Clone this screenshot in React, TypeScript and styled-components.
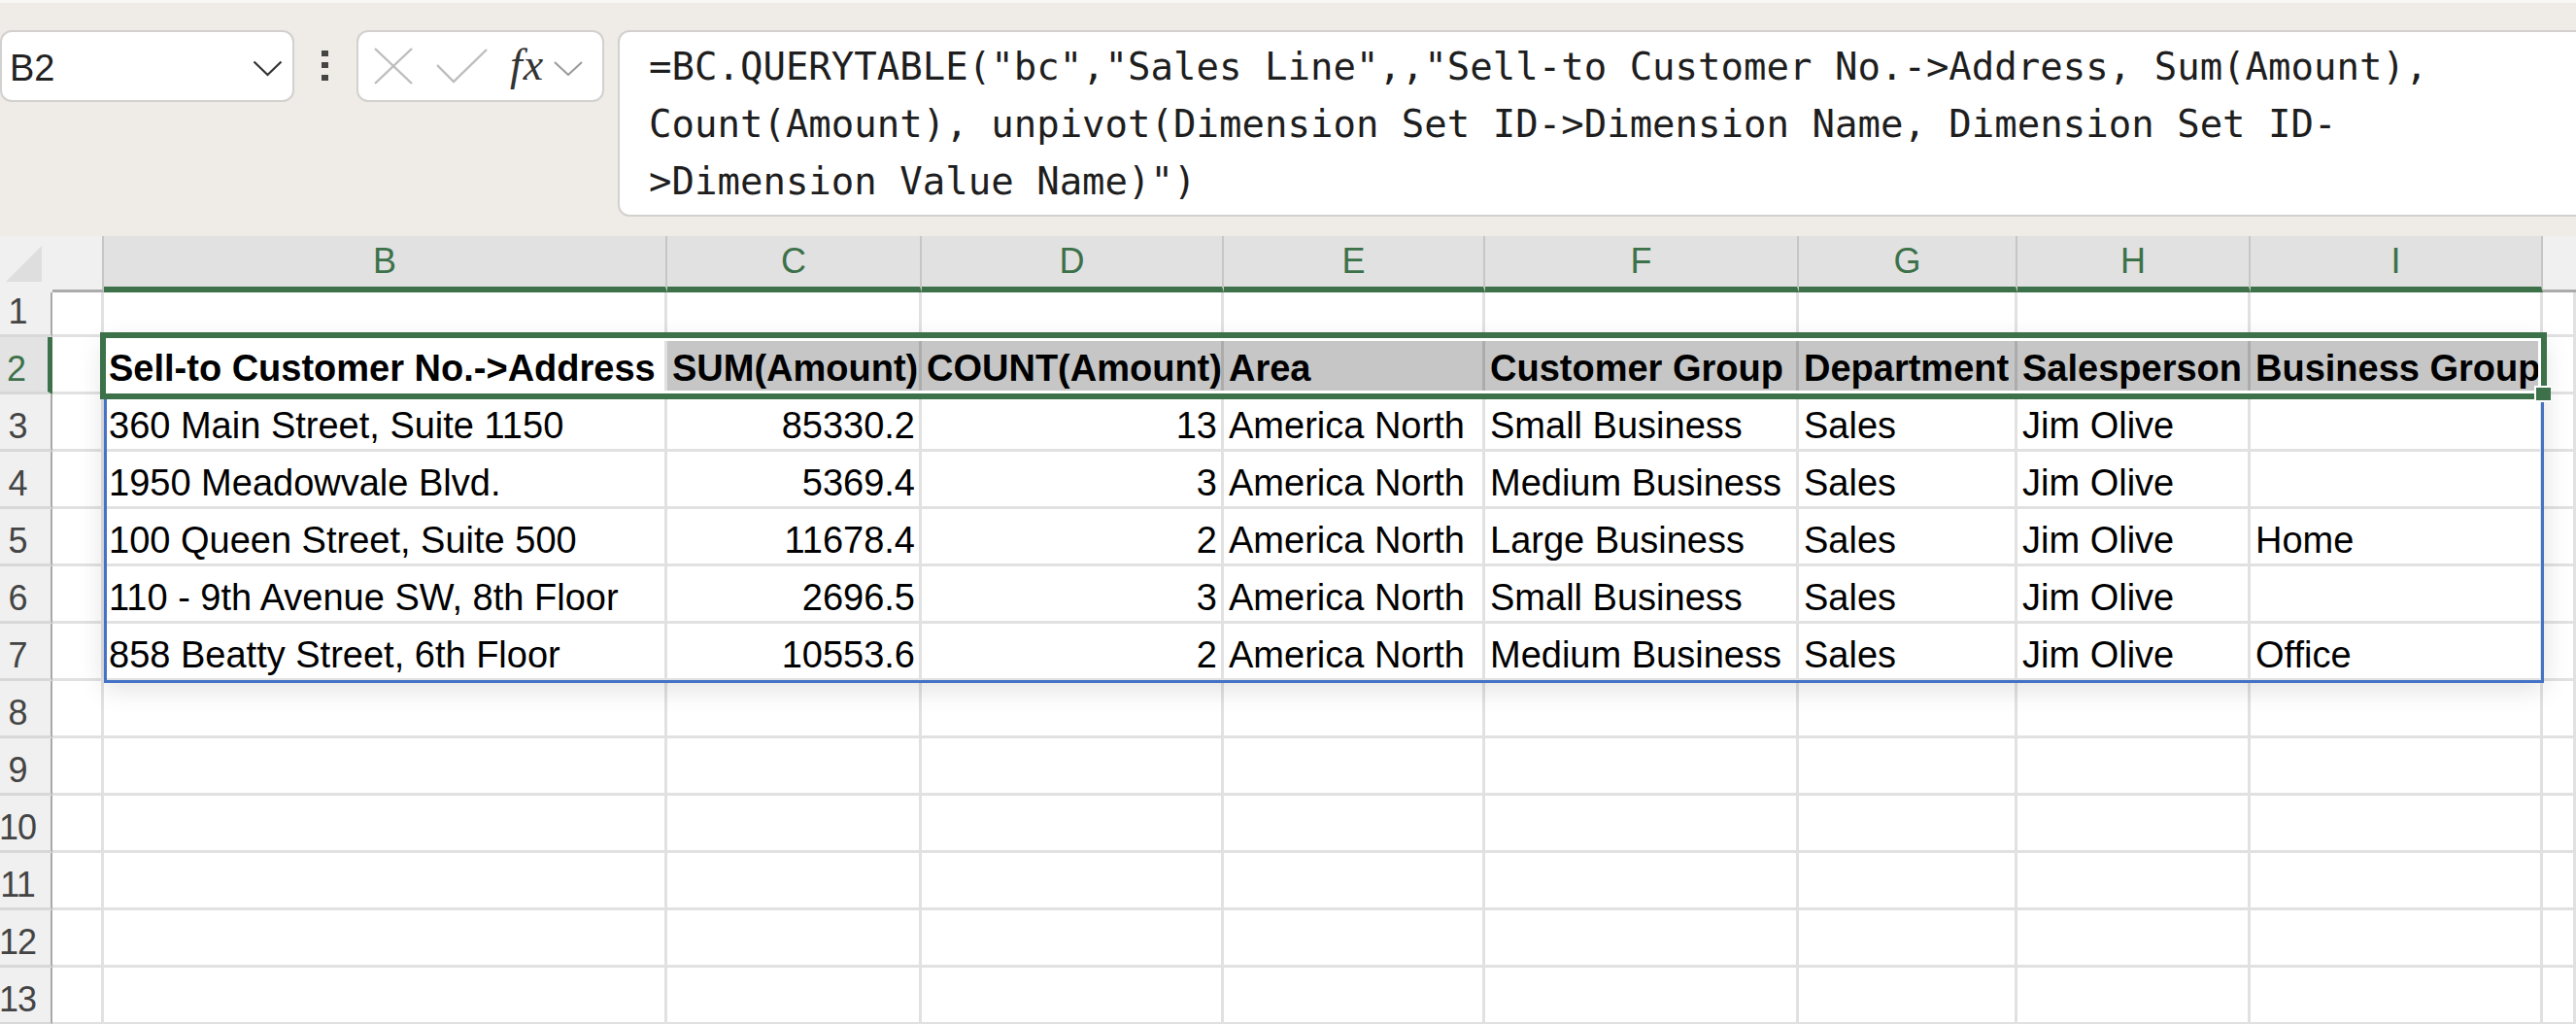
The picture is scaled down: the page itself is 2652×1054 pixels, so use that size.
import React from "react";
import styled, { createGlobalStyle, css } from "styled-components";

const GREEN = "#3d7149";
const GRID = "#e1e1e1";
const CELL_FONT = `"Liberation Sans", Arial, sans-serif`;

const GlobalStyle = createGlobalStyle`
  html, body {
    margin: 0;
    padding: 0;
    background: #ffffff;
    overflow: hidden;
  }
  * {
    box-sizing: border-box;
  }
`;

const Page = styled.div`
  width: 2652px;
  height: 1054px;
  overflow: hidden;
  background: #ffffff;
  font-family: ${CELL_FONT};
`;

const FormulaBar = styled.div`
  height: 243px;
  display: flex;
  align-items: flex-start;
  padding-top: 28px;
  background: #efebe7;
  border-top: 3px solid #f8f7f6;
`;

const InputShell = styled.div`
  height: 74px;
  background: #ffffff;
  border: 2px solid #d3d1cf;
  border-radius: 12px;
  display: flex;
  align-items: center;
`;

const NameBox = styled(InputShell)`
  width: 303px;
  padding: 4px 10px 0 8px;
  justify-content: space-between;
  font-size: 38px;
  color: #222222;

  & svg {
    margin-top: 0;
  }
`;

const Grip = styled.svg`
  margin: 21px 0 0 28px;
  flex: none;
`;

const ActionBox = styled(InputShell)`
  width: 255px;
  margin-left: 29px;
  padding-left: 16px;
`;

const FxLabel = styled.span`
  font-family: "Liberation Serif", "Times New Roman", serif;
  font-style: italic;
  font-size: 46px;
  color: #333333;
  margin: -4px 0 0 22px;
  letter-spacing: 1px;
`;

const FormulaInput = styled.div`
  flex: 1;
  height: 192px;
  margin: 0 -40px 0 14px;
  padding: 6px 0 0 30px;
  background: #ffffff;
  border: 2px solid #d3d1cf;
  border-radius: 12px;
  font-family: "DejaVu Sans Mono", "Liberation Mono", monospace;
  font-size: 39px;
  line-height: 59px;
  color: #1e1e1e;
  white-space: pre;
`;

const FormulaLine = styled.span`
  display: block;
`;

const Sheet = styled.div`
  position: relative;
  display: grid;
  grid-template-columns: 54px 53px 580px 262px 311px 269px 323px 225px 240px 301px 1fr;
  grid-template-rows: 58px 46px repeat(12, 59px);
`;

const Corner = styled.div`
  background: #f0f0f0;
  padding: 10px 0 0 6px;
`;

const ColHeader = styled.div<{ $active?: boolean; $last?: boolean }>`
  display: flex;
  align-items: center;
  justify-content: center;
  font-size: 36px;
  color: ${GREEN};
  background: ${({ $active }) => ($active ? "#e1e1e1" : "#f0f0f0")};
  border-right: ${({ $last }) => ($last ? "none" : "2px solid #c6c6c6")};
  border-bottom: ${({ $active }) =>
    $active ? `6px solid ${GREEN}` : "3px solid #ababab"};
`;

const RowHeader = styled.div<{ $active?: boolean }>`
  display: flex;
  align-items: flex-end;
  justify-content: center;
  padding: 0 16px 2px 0;
  font-size: 36px;
  letter-spacing: -1px;
  color: ${({ $active }) => ($active ? GREEN : "#444444")};
  background: ${({ $active }) => ($active ? "#e3e3e3" : "#f0f0f0")};
  border-bottom: 3px solid #d8d8d8;
  border-right: ${({ $active }) =>
    $active ? `5px solid ${GREEN}` : "2px solid #a9a9a9"};
`;

const Cell = styled.div<{ $align?: "left" | "right"; $bold?: boolean; $shade?: boolean }>`
  display: flex;
  align-items: flex-end;
  justify-content: ${({ $align }) => ($align === "right" ? "flex-end" : "flex-start")};
  padding: 0 4px 2px 5px;
  overflow: hidden;
  white-space: nowrap;
  font-size: 38px;
  font-weight: ${({ $bold }) => ($bold ? 700 : 400)};
  color: #000000;
  background: #ffffff;
  border-right: 3px solid ${GRID};
  border-bottom: 3px solid ${GRID};

  ${({ $shade }) =>
    $shade &&
    css`
      background: #c6c6c6;
      border-right-color: #acacac;
    `}
`;

const SpillRange = styled.div`
  position: absolute;
  left: 107px;
  top: 104px;
  width: 2512px;
  height: 356px;
  border: 3px solid #4472c4;
  box-shadow: 0 6px 26px rgba(0, 0, 0, 0.12);
  pointer-events: none;
`;

const Selection = styled.div`
  position: absolute;
  left: 103px;
  top: 99px;
  width: 2519px;
  height: 69px;
  border: 6px solid ${GREEN};
  box-shadow: inset 0 0 0 3px #ffffff;
  pointer-events: none;
`;

const FillHandle = styled.div`
  position: absolute;
  left: 2609px;
  top: 154px;
  width: 17px;
  height: 17px;
  background: ${GREEN};
  border: 2px solid #ffffff;
  border-right: none;
`;

const columns = ["B", "C", "D", "E", "F", "G", "H", "I"];

const headers = [
  "Sell-to Customer No.->Address",
  "SUM(Amount)",
  "COUNT(Amount)",
  "Area",
  "Customer Group",
  "Department",
  "Salesperson",
  "Business Group",
];

const rows: (string | number)[][] = [
  ["360 Main Street, Suite 1150", "85330.2", 13, "America North", "Small Business", "Sales", "Jim Olive", ""],
  ["1950 Meadowvale Blvd.", "5369.4", 3, "America North", "Medium Business", "Sales", "Jim Olive", ""],
  ["100 Queen Street, Suite 500", "11678.4", 2, "America North", "Large Business", "Sales", "Jim Olive", "Home"],
  ["110 - 9th Avenue SW, 8th Floor", "2696.5", 3, "America North", "Small Business", "Sales", "Jim Olive", ""],
  ["858 Beatty Street, 6th Floor", "10553.6", 2, "America North", "Medium Business", "Sales", "Jim Olive", "Office"],
];

const formula = [
  '=BC.QUERYTABLE("bc","Sales Line",,"Sell-to Customer No.->Address, Sum(Amount),',
  "Count(Amount), unpivot(Dimension Set ID->Dimension Name, Dimension Set ID-",
  '>Dimension Value Name)")',
];

const isNumeric = (col: number) => col === 1 || col === 2;

const EmptyRow = ({ n }: { n: number }) => (
  <>
    <RowHeader>{n}</RowHeader>
    {Array.from({ length: 10 }).map((_, i) => (
      <Cell key={i} />
    ))}
  </>
);

export default function App() {
  return (
    <Page>
      <GlobalStyle />
      <FormulaBar>
        <NameBox>
          <span>B2</span>
          <svg width="31" height="17" viewBox="0 0 31 17">
            <polyline points="1.5,1.5 15.5,15 29.5,1.5" fill="none" stroke="#333" strokeWidth="2.2" />
          </svg>
        </NameBox>
        <Grip width="7" height="31" viewBox="0 0 7 31">
          <rect x="0" y="0" width="7" height="6" fill="#454545" />
          <rect x="0" y="12" width="7" height="6" fill="#454545" />
          <rect x="0" y="25" width="7" height="6" fill="#454545" />
        </Grip>
        <ActionBox>
          <svg width="40" height="38" viewBox="0 0 40 38">
            <line x1="1" y1="1" x2="39" y2="37" stroke="#bdbdbd" strokeWidth="2.4" />
            <line x1="39" y1="1" x2="1" y2="37" stroke="#bdbdbd" strokeWidth="2.4" />
          </svg>
          <svg width="54" height="36" viewBox="0 0 54 36" style={{ marginLeft: 24 }}>
            <polyline points="1,17 18,34 52,1" fill="none" stroke="#bdbdbd" strokeWidth="2.4" />
          </svg>
          <FxLabel>fx</FxLabel>
          <svg width="30" height="15" viewBox="0 0 30 15" style={{ marginLeft: 10, marginTop: 4 }}>
            <polyline points="1,1 15,14 29,1" fill="none" stroke="#9a9a9a" strokeWidth="2" />
          </svg>
        </ActionBox>
        <FormulaInput>
          {formula.map((line, i) => (
            <FormulaLine key={i}>{line}</FormulaLine>
          ))}
        </FormulaInput>
      </FormulaBar>

      <Sheet>
        <Corner>
          <svg width="37" height="37" viewBox="0 0 37 37">
            <polygon points="37,0 37,37 0,37" fill="#dedede" />
          </svg>
        </Corner>
        <ColHeader />
        {columns.map((c) => (
          <ColHeader key={c} $active>
            {c}
          </ColHeader>
        ))}
        <ColHeader $last />

        <EmptyRow n={1} />

        <RowHeader $active>2</RowHeader>
        <Cell />
        {headers.map((h, i) => (
          <Cell key={h} $bold $shade={i > 0}>
            {h}
          </Cell>
        ))}
        <Cell />

        {rows.map((r, ri) => (
          <React.Fragment key={ri}>
            <RowHeader>{ri + 3}</RowHeader>
            <Cell />
            {r.map((v, ci) => (
              <Cell key={ci} $align={isNumeric(ci) ? "right" : "left"}>
                {v}
              </Cell>
            ))}
            <Cell />
          </React.Fragment>
        ))}

        {[8, 9, 10, 11, 12, 13].map((n) => (
          <EmptyRow key={n} n={n} />
        ))}

        <SpillRange />
        <Selection />
        <FillHandle />
      </Sheet>
    </Page>
  );
}
